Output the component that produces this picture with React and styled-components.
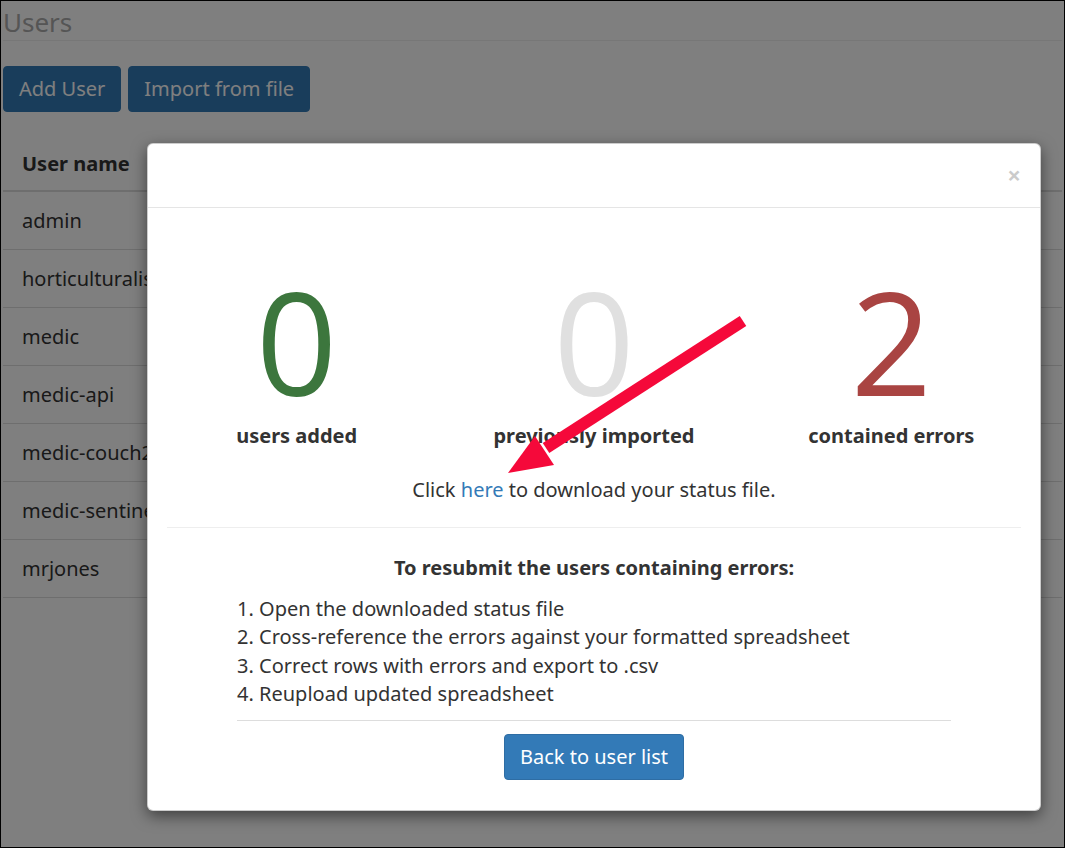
import { createGlobalStyle, styled } from "styled-components";

const GlobalStyle = createGlobalStyle`
  * { box-sizing: border-box; }
  body {
    margin: 0;
    font-family: "Noto Sans", "Open Sans", sans-serif;
    color: #333;
    background: #fff;
  }
`;

const users = [
  "admin",
  "horticulturalist",
  "medic",
  "medic-api",
  "medic-couch2pg",
  "medic-sentinel",
  "mrjones",
];

const steps = [
  "Open the downloaded status file",
  "Cross-reference the errors against your formatted spreadsheet",
  "Correct rows with errors and export to .csv",
  "Reupload updated spreadsheet",
];

const stats = [
  { value: 0, label: "users added", color: "#3c763d" },
  { value: 0, label: "previously imported", color: "#e0e0e0" },
  { value: 2, label: "contained errors", color: "#a94442" },
];

export default function App() {
  return (
    <Screen>
      <GlobalStyle />
      <Page>
        <Title>Users</Title>
        <Toolbar>
          <Button>Add User</Button>
          <Button>Import from file</Button>
        </Toolbar>
        <Table>
          <thead>
            <tr>
              <Th>User name</Th>
            </tr>
          </thead>
          <tbody>
            {users.map((u) => (
              <tr key={u}>
                <Td>{u}</Td>
              </tr>
            ))}
          </tbody>
        </Table>
      </Page>

      <Backdrop />

      <Modal>
        <ModalHeader>
          <Close>×</Close>
        </ModalHeader>
        <ModalBody>
          <Stats>
            {stats.map((s) => (
              <Stat key={s.label}>
                <Number $color={s.color}>{s.value}</Number>
                <StatLabel>{s.label}</StatLabel>
              </Stat>
            ))}
          </Stats>
          <Download>
            Click <a href="#status">here</a> to download your status file.
          </Download>
          <Rule />
          <Instructions>
            <SubTitle>To resubmit the users containing errors:</SubTitle>
            <Steps>
              {steps.map((s, i) => (
                <li key={s}>
                  {i + 1}. {s}
                </li>
              ))}
            </Steps>
            <InnerRule />
            <Footer>
              <Button $bright>Back to user list</Button>
            </Footer>
          </Instructions>
        </ModalBody>
      </Modal>

      <Arrow viewBox="0 0 1065 848" width="1065" height="848">
        <line
          x1="743"
          y1="321"
          x2="546"
          y2="448"
          stroke="#f5093a"
          strokeWidth="12"
        />
        <polygon points="508,473 535,436 554,465" fill="#f5093a" />
      </Arrow>
    </Screen>
  );
}

const Screen = styled.div`
  position: relative;
  width: 1065px;
  height: 848px;
  border: 1px solid #000;
  overflow: hidden;
  background: #fff;
`;

const Page = styled.div`
  padding: 0 2px;
`;

const Title = styled.h1`
  margin: 7px 0 3px;
  font-size: 26px;
  line-height: 1.1;
  font-weight: 400;
  color: #aaa;
  border-bottom: 1px solid #eee;
  padding-bottom: 3px;
`;

const Toolbar = styled.div`
  display: flex;
  gap: 7px;
  margin-top: 25px;
`;

const Button = styled.button`
  font-family: inherit;
  font-size: 20px;
  line-height: 25px;
  padding: 9px 15px 10px;
  color: #fff;
  background: #337ab7;
  border: 1px solid ${(p) => (p.$bright ? "#2e6da4" : "#337ab7")};
  border-radius: 4px;
  cursor: pointer;
`;

const Table = styled.table`
  width: 100%;
  margin-top: 25px;
  border-collapse: collapse;
  font-size: 20px;
  line-height: 28px;
`;

const Th = styled.th`
  text-align: left;
  padding: 13px 19px 12px;
  font-weight: 700;
  color: #333;
  border-bottom: 2px solid #ddd;
`;

const Td = styled.td`
  padding: 15px 19px 14px;
  color: #333;
  border-bottom: 1px solid #ddd;
  white-space: nowrap;
`;

const Backdrop = styled.div`
  position: absolute;
  inset: 0;
  background: rgba(0, 0, 0, 0.5);
`;

const Modal = styled.div`
  position: absolute;
  left: 146px;
  top: 142px;
  width: 894px;
  height: 668px;
  background: #fff;
  border: 1px solid rgba(0, 0, 0, 0.2);
  border-radius: 6px;
  box-shadow: 0 5px 15px rgba(0, 0, 0, 0.5);
`;

const ModalHeader = styled.div`
  display: flex;
  justify-content: flex-end;
  align-items: center;
  height: 64px;
  padding: 0 19px;
  border-bottom: 1px solid #e5e5e5;
`;

const Close = styled.button`
  font-family: inherit;
  font-size: 24px;
  font-weight: 700;
  line-height: 1;
  color: #000;
  opacity: 0.2;
  background: none;
  border: 0;
  padding: 0;
  margin-top: -2px;
  cursor: pointer;
`;

const ModalBody = styled.div`
  padding: 0 19px;
  text-align: center;
  font-size: 20px;
  line-height: 28px;
`;

const Stats = styled.div`
  display: grid;
  grid-template-columns: repeat(3, 1fr);
  margin: 77px -19px 0;
`;

const Stat = styled.div`
  display: flex;
  flex-direction: column;
  align-items: center;
`;

const Number = styled.div`
  font-family: "Open Sans", "Noto Sans", sans-serif;
  font-size: 142px;
  line-height: 112px;
  color: ${(p) => p.$color};
`;

const StatLabel = styled.div`
  margin-top: 25px;
  font-weight: 700;
  color: #333;
`;

const Download = styled.p`
  margin: 26px 0 0;
  color: #333;

  a {
    color: #337ab7;
    text-decoration: none;
  }
`;

const Rule = styled.hr`
  margin: 23px 0 0;
  border: 0;
  border-top: 1px solid #eee;
`;

const Instructions = styled.div`
  width: 714px;
  margin: 0 auto;
`;

const SubTitle = styled.div`
  margin-top: 26px;
  font-weight: 700;
  color: #333;
`;

const Steps = styled.ol`
  list-style: none;
  margin: 13px 0 0;
  padding: 0;
  text-align: left;
  color: #333;

  li {
    line-height: 28.3px;
  }
`;

const InnerRule = styled.hr`
  margin: 12px 0 0;
  border: 0;
  border-top: 1px solid #ddd;
`;

const Footer = styled.div`
  display: flex;
  justify-content: center;
  margin-top: 13px;
`;

const Arrow = styled.svg`
  position: absolute;
  left: -1px;
  top: -1px;
  pointer-events: none;
`;
